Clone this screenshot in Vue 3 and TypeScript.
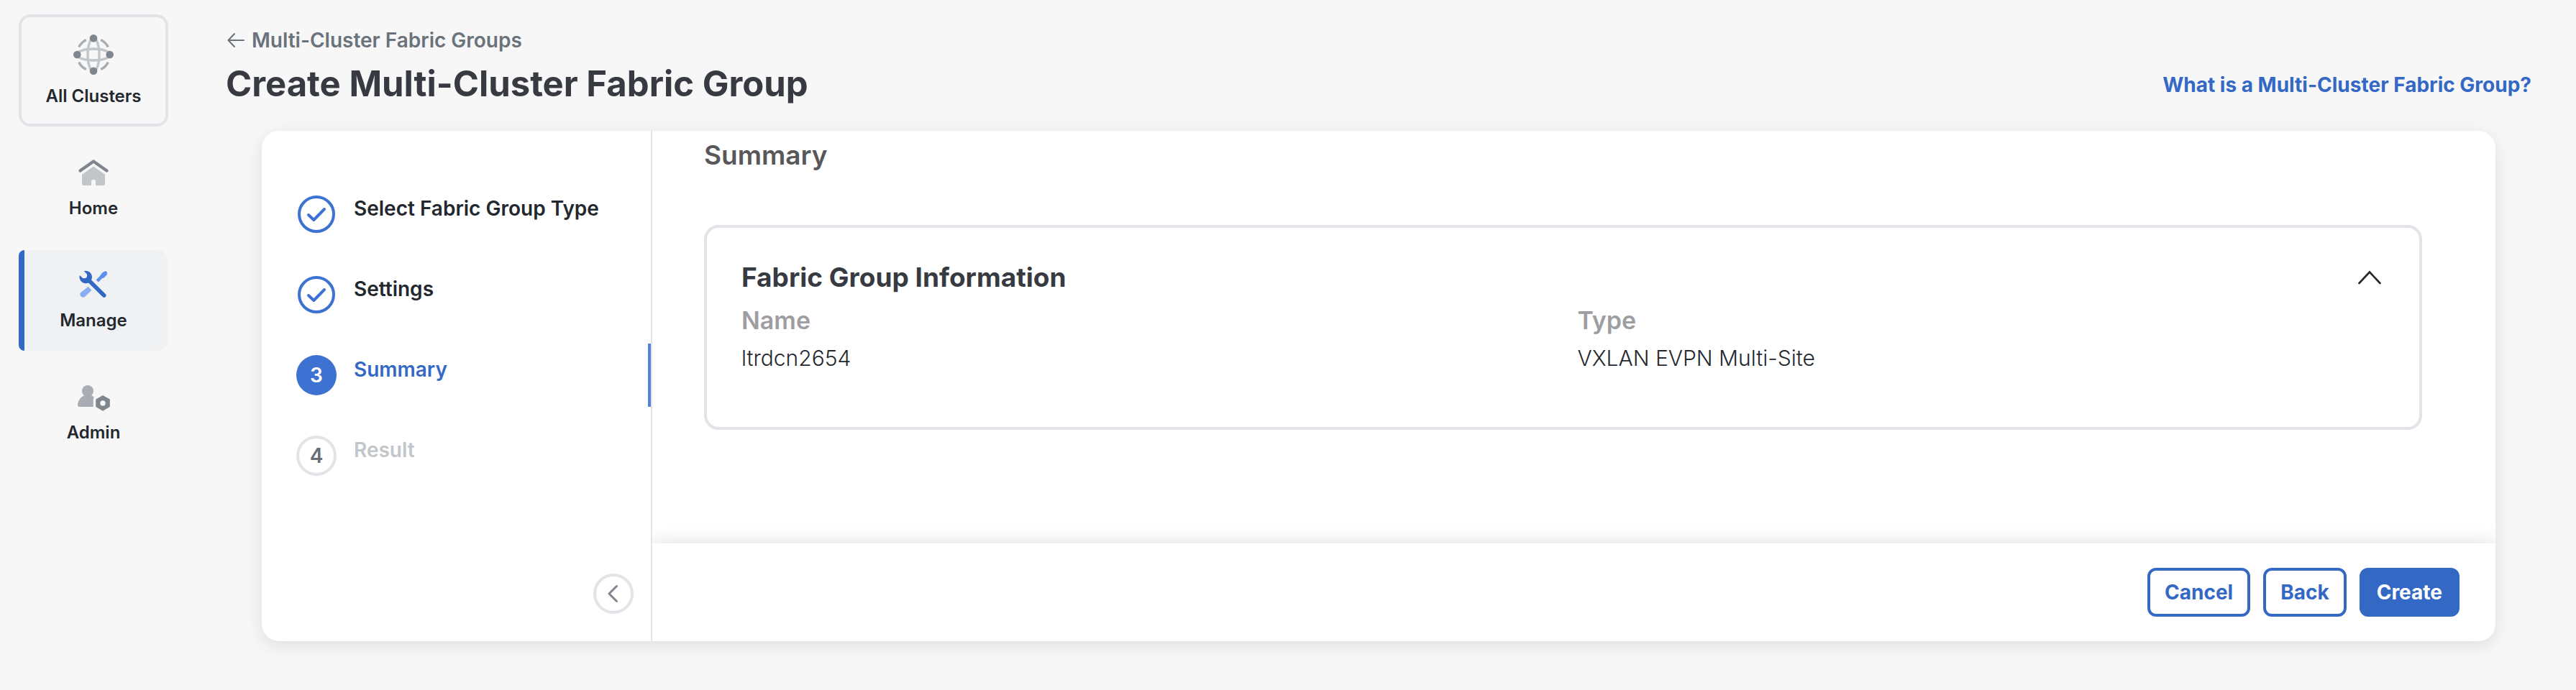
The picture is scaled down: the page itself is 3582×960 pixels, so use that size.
<script setup lang="ts">
import { ref } from 'vue'

type StepState = 'done' | 'current' | 'pending'

interface Step {
  label: string
  state: StepState
}

const steps: Step[] = [
  { label: 'Select Fabric Group Type', state: 'done' },
  { label: 'Settings', state: 'done' },
  { label: 'Summary', state: 'current' },
  { label: 'Result', state: 'pending' },
]

const details = [
  { term: 'Name', value: 'ltrdcn2654' },
  { term: 'Type', value: 'VXLAN EVPN Multi-Site' },
]

const expanded = ref(true)
</script>

<template>
  <div class="page">
    <nav class="sidebar" aria-label="Main">
      <button type="button" class="nav-item cluster">
        <svg class="icon-cluster" viewBox="0 0 56 56" fill="none" aria-hidden="true">
          <g stroke="#c2c6cb" stroke-width="3.4">
            <ellipse cx="28" cy="28" rx="8" ry="23" />
            <ellipse cx="28" cy="28" rx="23" ry="8" />
          </g>
          <g stroke="#a8adb4" stroke-width="3.4">
            <path d="M7.6 17.4A23 23 0 0 1 17.8 7.4" />
            <path d="M38.2 7.4A23 23 0 0 1 48.4 17.4" />
            <path d="M48.4 38.6A23 23 0 0 1 38.2 48.6" />
            <path d="M17.8 48.6A23 23 0 0 1 7.6 38.6" />
          </g>
          <g fill="#80868e">
            <circle cx="28" cy="5.3" r="5.3" />
            <circle cx="28" cy="50.7" r="5.3" />
            <circle cx="5.3" cy="28" r="5.3" />
            <circle cx="50.7" cy="28" r="5.3" />
          </g>
        </svg>
        <span>All Clusters</span>
      </button>

      <a href="#home" class="nav-item">
        <svg class="icon-nav" viewBox="0 0 48 40" fill="none" aria-hidden="true">
          <path d="M5.5 17.5L24 4.5L42.5 17.5" stroke="#80868e" stroke-width="4.4" stroke-linecap="round" stroke-linejoin="round" />
          <path d="M24 11.5L40 22.8V35a3 3 0 0 1-3 3H27v-5.5a2.5 2.5 0 0 0-2.5-2.5h-1A2.5 2.5 0 0 0 21 32.5V38H11a3 3 0 0 1-3-3V22.8Z" fill="#c2c6cb" />
        </svg>
        <span>Home</span>
      </a>

      <a href="#manage" class="nav-item active" aria-current="page">
        <svg class="icon-nav" viewBox="0 0 48 40" fill="none" aria-hidden="true">
          <path d="M16.7 22.7L21.3 27.7L12 37A4.3 4.3 0 0 1 5.9 31.3Z" fill="#8aaef3" />
          <path d="M29.3 15L36 8" stroke="#5e90ee" stroke-width="4.6" />
          <path d="M34 6.2L37 2.8L41 1L43.2 3L42.6 6.2L38.6 10.6L35.4 11.4L33.4 9.4Z" fill="#5e90ee" />
          <path d="M17 13.5L38.7 35" stroke="#3468c5" stroke-width="5.6" stroke-linecap="round" />
          <path d="M10.7 1.2A8.7 8.7 0 1 1 4.9 7L9 10.9Q12 12 14.2 10.2Q15.8 7.5 14.6 5Z" fill="#3468c5" />
        </svg>
        <span>Manage</span>
      </a>

      <a href="#admin" class="nav-item">
        <svg class="icon-nav" viewBox="0 0 48 40" aria-hidden="true">
          <circle cx="16" cy="12" r="8" fill="#a8adb4" />
          <path d="M4 34a2 2 0 0 1-2-2C2 25 6.5 20 11.5 18h9c2 .5 3.2 1.5 4.2 2.5L23.8 23V34Z" fill="#a8adb4" />
          <path fill-rule="evenodd" d="M37 18L46.8 23.6V34L37 39.8L27.2 34V23.6ZM37 25.2a3.7 3.7 0 1 0 0 7.4a3.7 3.7 0 0 0 0-7.4Z" fill="#80868e" />
        </svg>
        <span>Admin</span>
      </a>
    </nav>

    <main class="main">
      <header class="header">
        <div>
          <a href="#groups" class="breadcrumb">
            <svg viewBox="0 0 24 24" fill="none" aria-hidden="true">
              <path d="M23 12H2M10 3L1.5 12L10 21" stroke="currentColor" stroke-width="2" stroke-linecap="round" stroke-linejoin="round" />
            </svg>
            <span>Multi-Cluster Fabric Groups</span>
          </a>
          <h1>Create Multi-Cluster Fabric Group</h1>
        </div>
        <a href="#help" class="help">What is a Multi-Cluster Fabric Group?</a>
      </header>

      <div class="wizard">
        <aside class="rail">
          <ol class="steps">
            <li
              v-for="(step, index) in steps"
              :key="step.label"
              class="step"
              :class="step.state"
              :aria-current="step.state === 'current' ? 'step' : undefined"
            >
              <span class="marker">
                <svg v-if="step.state === 'done'" viewBox="0 0 56 56" fill="none" aria-hidden="true">
                  <circle cx="28" cy="28" r="24" stroke="#3d72d2" stroke-width="4" />
                  <path d="M17 29L24.3 36L39 21" stroke="#3d72d2" stroke-width="4" stroke-linecap="round" stroke-linejoin="round" />
                </svg>
                <template v-else>{{ index + 1 }}</template>
              </span>
              <span class="step-label">{{ step.label }}</span>
            </li>
          </ol>
          <button type="button" class="collapse" aria-label="Collapse steps">
            <svg viewBox="0 0 24 24" fill="none" aria-hidden="true">
              <path d="M16.5 1.5L6 12L16.5 22.5" stroke="currentColor" stroke-width="3" stroke-linecap="round" stroke-linejoin="round" />
            </svg>
          </button>
        </aside>

        <div class="content">
          <section class="body">
            <h2>Summary</h2>
            <article class="info">
              <div class="info-head">
                <h3>Fabric Group Information</h3>
                <button
                  type="button"
                  class="toggle"
                  :aria-expanded="expanded"
                  aria-label="Toggle Fabric Group Information"
                  @click="expanded = !expanded"
                >
                  <svg viewBox="0 0 32 20" fill="none" aria-hidden="true">
                    <path d="M1.5 18L16 2.5L30.5 18" stroke="currentColor" stroke-width="2.6" stroke-linecap="round" stroke-linejoin="miter" />
                  </svg>
                </button>
              </div>
              <dl v-if="expanded" class="details">
                <div v-for="item in details" :key="item.term">
                  <dt>{{ item.term }}</dt>
                  <dd>{{ item.value }}</dd>
                </div>
              </dl>
            </article>
          </section>

          <footer class="footer">
            <button type="button" class="btn">Cancel</button>
            <button type="button" class="btn">Back</button>
            <button type="button" class="btn primary">Create</button>
          </footer>
        </div>
      </div>
    </main>
  </div>
</template>

<style>
body {
  margin: 0;
  background: #f7f7f7;
}
</style>

<style scoped>
.page {
  display: flex;
  min-height: 100vh;
  box-sizing: border-box;
  background: #f7f7f7;
  color: #23282e;
  font-family: Inter, "Liberation Sans", sans-serif;
  font-size: 28px;
  line-height: 32px;
}

.page *,
.page *::before {
  box-sizing: border-box;
}

a {
  color: inherit;
  text-decoration: none;
}

button {
  font: inherit;
  color: inherit;
  cursor: pointer;
}

svg {
  display: block;
}

/* Sidebar */
.sidebar {
  display: flex;
  flex: none;
  flex-direction: column;
  gap: 16px;
  width: 260px;
  padding: 20px 26px;
}

.nav-item {
  display: flex;
  flex-direction: column;
  align-items: center;
  gap: 14px;
  height: 140px;
  padding: 28px 0 0;
  border-radius: 16px;
  font-size: 24px;
  font-weight: 600;
}

.cluster {
  height: 156px;
  padding-top: 24px;
  border: 4px solid #e2e4e8;
  background: transparent;
}

.active {
  position: relative;
  overflow: hidden;
  border-radius: 8px 16px 16px 8px;
  background: #eff1f3;
}

.active::before {
  content: "";
  position: absolute;
  top: 0;
  bottom: 0;
  left: 0;
  width: 8px;
  background: #3468c5;
}

.icon-cluster {
  width: 56px;
  height: 56px;
}

.icon-nav {
  width: 48px;
  height: 40px;
}

/* Page header */
.main {
  display: flex;
  flex: 1;
  flex-direction: column;
  min-width: 0;
  padding: 40px 62px 68px 54px;
}

.header {
  display: flex;
  align-items: flex-end;
  justify-content: space-between;
  gap: 32px;
}

.breadcrumb {
  display: flex;
  align-items: center;
  gap: 10px;
  color: #6a727b;
  font-weight: 600;
}

.breadcrumb svg {
  width: 24px;
  height: 24px;
  margin-left: 2px;
}

h1 {
  margin: 15px 0 0;
  color: #373b41;
  font-size: 49px;
  font-weight: 700;
  line-height: 60px;
}

.help {
  padding-bottom: 13px;
  color: #3468c5;
  font-weight: 700;
}

/* Wizard card */
.wizard {
  display: flex;
  flex: 1;
  margin: 35px 50px 0;
  border-radius: 24px;
  background: #fff;
  box-shadow: 0 6px 24px rgba(0, 0, 0, 0.1);
}

.rail {
  display: flex;
  flex: none;
  flex-direction: column;
  justify-content: space-between;
  width: 543px;
  padding: 72px 0 38px;
  border-right: 2px solid #e2e4e8;
}

.steps {
  display: flex;
  flex-direction: column;
  gap: 24px;
  margin: 0;
  padding: 0;
  list-style: none;
}

.step {
  display: flex;
  gap: 24px;
  height: 88px;
  padding: 16px 0 0 48px;
  font-weight: 600;
}

.marker {
  display: flex;
  flex: none;
  align-items: center;
  justify-content: center;
  width: 56px;
  height: 56px;
  border-radius: 50%;
}

.marker svg {
  width: 56px;
  height: 56px;
}

.step-label {
  padding-top: 4px;
}

.current {
  border-right: 4px solid #5581dd;
  border-radius: 2px 0 0 2px;
  color: #3468c5;
}

.current .marker {
  background: #3d72d2;
  color: #fff;
}

.pending {
  color: #c2c6cb;
}

.pending .marker {
  border: 4px solid #e2e4e8;
  color: #666e76;
}

.collapse {
  display: flex;
  align-items: center;
  align-self: flex-end;
  justify-content: center;
  width: 56px;
  height: 56px;
  margin-right: 24px;
  padding: 0;
  border: 4px solid #e2e4e8;
  border-radius: 50%;
  background: #fff;
  color: #80868e;
}

.collapse svg {
  width: 24px;
  height: 24px;
}

.content {
  display: flex;
  flex: 1;
  flex-direction: column;
  min-width: 0;
  overflow: hidden;
  border-radius: 0 24px 24px 0;
}

.body {
  flex: 1;
  padding: 14px 102px 32px 72px;
}

h2 {
  margin: 0;
  color: #58585b;
  font-size: 37px;
  font-weight: 600;
  line-height: 40px;
}

.info {
  margin-top: 77px;
  padding: 49px 48px 68px;
  border: 4px solid #e2e4e8;
  border-radius: 20px;
}

.info-head {
  display: flex;
  align-items: center;
  justify-content: space-between;
}

h3 {
  margin: 0;
  color: #373b41;
  font-size: 37px;
  font-weight: 700;
  line-height: 40px;
}

.toggle {
  padding: 0 4px 0 0;
  border: 0;
  background: transparent;
}

.toggle svg {
  width: 34px;
  height: 20px;
}

.details {
  display: grid;
  grid-template-columns: 1fr 1fr;
  gap: 40px;
  margin: 16px 0 0;
}

dt {
  color: #9e9ea2;
  font-size: 34px;
  font-weight: 600;
  line-height: 48px;
}

dd {
  margin: 0;
  font-size: 30px;
  font-weight: 300;
  line-height: 56px;
}

.footer {
  display: flex;
  align-items: center;
  justify-content: flex-end;
  gap: 18px;
  padding: 34px 50px;
  background: #fff;
  box-shadow: 0 0 24px rgba(0, 0, 0, 0.14);
}

.btn {
  height: 68px;
  padding: 0 20px;
  border: 4px solid #3468c5;
  border-radius: 12px;
  background: #fff;
  color: #3468c5;
  font-weight: 700;
}

.primary {
  background: #3468c5;
  color: #fff;
}
</style>
